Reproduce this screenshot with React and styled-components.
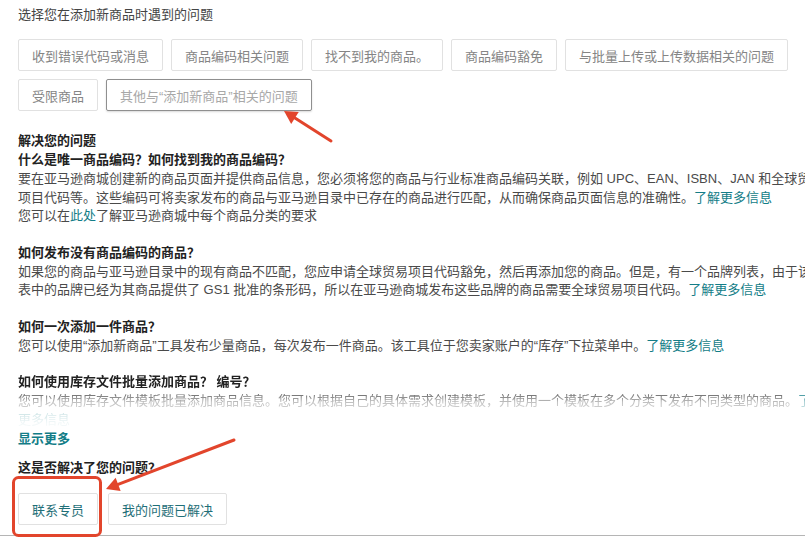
import React from "react";
import styled, { createGlobalStyle } from "styled-components";

const GlobalStyle = createGlobalStyle`
  html, body {
    margin: 0;
    padding: 0;
    background: #fff;
  }
  body {
    font-family: "Liberation Sans", "Noto Sans CJK SC", sans-serif;
    color: #444;
  }
`;

const choices = [
  { label: "收到错误代码或消息" },
  { label: "商品编码相关问题" },
  { label: "找不到我的商品。" },
  { label: "商品编码豁免" },
  { label: "与批量上传或上传数据相关的问题" },
  { label: "受限商品" },
  { label: "其他与“添加新商品”相关的问题", active: true },
];

const Link = styled.a`
  color: #137d87;
  text-decoration: none;
`;

const articles = [
  {
    title: "什么是唯一商品编码？如何找到我的商品编码？",
    lines: [
      <>要在亚马逊商城创建新的商品页面并提供商品信息，您必须将您的商品与行业标准商品编码关联，例如 UPC、EAN、ISBN、JAN 和全球贸易</>,
      <>
        项目代码等。这些编码可将卖家发布的商品与亚马逊目录中已存在的商品进行匹配，从而确保商品页面信息的准确性。
        <Link>了解更多信息</Link>
      </>,
      <>
        您可以在<Link>此处</Link>了解亚马逊商城中每个商品分类的要求
      </>,
    ],
  },
  {
    title: "如何发布没有商品编码的商品？",
    lines: [
      <>如果您的商品与亚马逊目录中的现有商品不匹配，您应申请全球贸易项目代码豁免，然后再添加您的商品。但是，有一个品牌列表，由于该列</>,
      <>
        表中的品牌已经为其商品提供了 GS1 批准的条形码，所以在亚马逊商城发布这些品牌的商品需要全球贸易项目代码。
        <Link>了解更多信息</Link>
      </>,
    ],
  },
  {
    title: "如何一次添加一件商品？",
    lines: [
      <>
        您可以使用“添加新商品”工具发布少量商品，每次发布一件商品。该工具位于您卖家账户的“库存”下拉菜单中。
        <Link>了解更多信息</Link>
      </>,
    ],
  },
  {
    title: "如何使用库存文件批量添加商品？ 编号？",
    faded: true,
    lines: [
      <>
        您可以使用库存文件模板批量添加商品信息。您可以根据自己的具体需求创建模板，并使用一个模板在多个分类下发布不同类型的商品。
        <Link>了解</Link>
      </>,
      <>
        <Link>更多信息</Link>
      </>,
    ],
  },
];

// arrow drawn from tail to tip, with a filled head at the tip
const Arrow = ({ from, to, head = 13, width = 7 }) => {
  const dx = to[0] - from[0];
  const dy = to[1] - from[1];
  const len = Math.hypot(dx, dy);
  const ux = dx / len;
  const uy = dy / len;
  const bx = to[0] - ux * head;
  const by = to[1] - uy * head;
  const px = -uy * width;
  const py = ux * width;
  const points = [
    `${to[0]},${to[1]}`,
    `${bx + px},${by + py}`,
    `${bx - px},${by - py}`,
  ].join(" ");
  return (
    <g>
      <line
        x1={from[0]}
        y1={from[1]}
        x2={bx}
        y2={by}
        stroke="#e2452c"
        strokeWidth="3"
        strokeLinecap="round"
      />
      <polygon points={points} fill="#e2452c" />
    </g>
  );
};

export default function App() {
  return (
    <Page>
      <GlobalStyle />
      <Prompt>选择您在添加新商品时遇到的问题</Prompt>
      <Choices>
        {choices.map((c) => (
          <Choice key={c.label} $active={c.active}>
            {c.label}
          </Choice>
        ))}
      </Choices>

      <SectionTitle>解决您的问题</SectionTitle>
      <Articles>
        {articles.map((a) => (
          <Article key={a.title} $faded={a.faded}>
            <ArticleTitle>{a.title}</ArticleTitle>
            <Body>
              {a.lines.map((line, i) => (
                <Line key={i}>{line}</Line>
              ))}
            </Body>
          </Article>
        ))}
      </Articles>
      <ShowMore>显示更多</ShowMore>

      <Question>这是否解决了您的问题？</Question>
      <Actions>
        <ActionButton>联系专员</ActionButton>
        <ActionButton>我的问题已解决</ActionButton>
      </Actions>
      <Divider />

      <Annotations width="805" height="539" viewBox="0 0 805 539">
        <Arrow from={[331, 141]} to={[284, 111]} />
        <Arrow from={[234, 440]} to={[106, 489]} />
        <rect
          x="13.5"
          y="477.5"
          width="87"
          height="58"
          rx="5"
          fill="none"
          stroke="#e2452c"
          strokeWidth="3"
        />
      </Annotations>
    </Page>
  );
}

const Page = styled.div`
  position: relative;
  width: 805px;
  height: 539px;
  overflow: hidden;
  padding: 5px 0 0 18px;
  box-sizing: border-box;
  font-size: 13px;
`;

const Prompt = styled.div`
  line-height: 19px;
  color: #444;
`;

const Choices = styled.div`
  display: flex;
  flex-wrap: wrap;
  gap: 8px;
  margin-top: 15px;
  width: 800px;
`;

const Choice = styled.div`
  height: 32px;
  box-sizing: border-box;
  display: flex;
  align-items: center;
  padding: 0 13px;
  border: 1px solid ${({ $active }) => ($active ? "#8f8f8f" : "#e1e1e1")};
  border-radius: 2px;
  color: ${({ $active }) => ($active ? "#a8a8a8" : "#858585")};
  box-shadow: ${({ $active }) =>
    $active ? "0 1px 2px rgba(0,0,0,0.15)" : "none"};
  white-space: nowrap;
`;

const SectionTitle = styled.div`
  margin-top: 20px;
  font-weight: bold;
  line-height: 19px;
  color: #222;
`;

const Articles = styled.div`
  display: flex;
  flex-direction: column;
  gap: 17px;
`;

const Article = styled.div`
  ${({ $faded }) =>
    $faded &&
    `
    -webkit-mask-image: linear-gradient(to bottom, #000 0, #000 19px, rgba(0,0,0,0.35) 30px, rgba(0,0,0,0.05) 52px);
    mask-image: linear-gradient(to bottom, #000 0, #000 19px, rgba(0,0,0,0.35) 30px, rgba(0,0,0,0.05) 52px);
  `}
`;

const ArticleTitle = styled.div`
  font-weight: bold;
  line-height: 19px;
  color: #222;
`;

const Body = styled.div`
  margin-top: 1px;
  line-height: 18.5px;
  color: #4a4a4a;
`;

const Line = styled.div`
  white-space: nowrap;
`;

const ShowMore = styled.div`
  color: #137d87;
  font-weight: bold;
  line-height: 19px;
`;

const Question = styled.div`
  margin-top: 10px;
  font-weight: bold;
  line-height: 19px;
  color: #222;
`;

const Actions = styled.div`
  display: flex;
  gap: 10px;
  margin-top: 16px;
`;

const ActionButton = styled.div`
  height: 32px;
  box-sizing: border-box;
  display: flex;
  align-items: center;
  padding: 0 13px;
  border: 1px solid #e1e1e1;
  border-radius: 2px;
  color: #1f6f78;
  white-space: nowrap;
`;

const Divider = styled.div`
  margin: 10px 0 0 -18px;
  border-top: 1px solid #b5b5b5;
`;

const Annotations = styled.svg`
  position: absolute;
  left: 0;
  top: 0;
  pointer-events: none;
`;
